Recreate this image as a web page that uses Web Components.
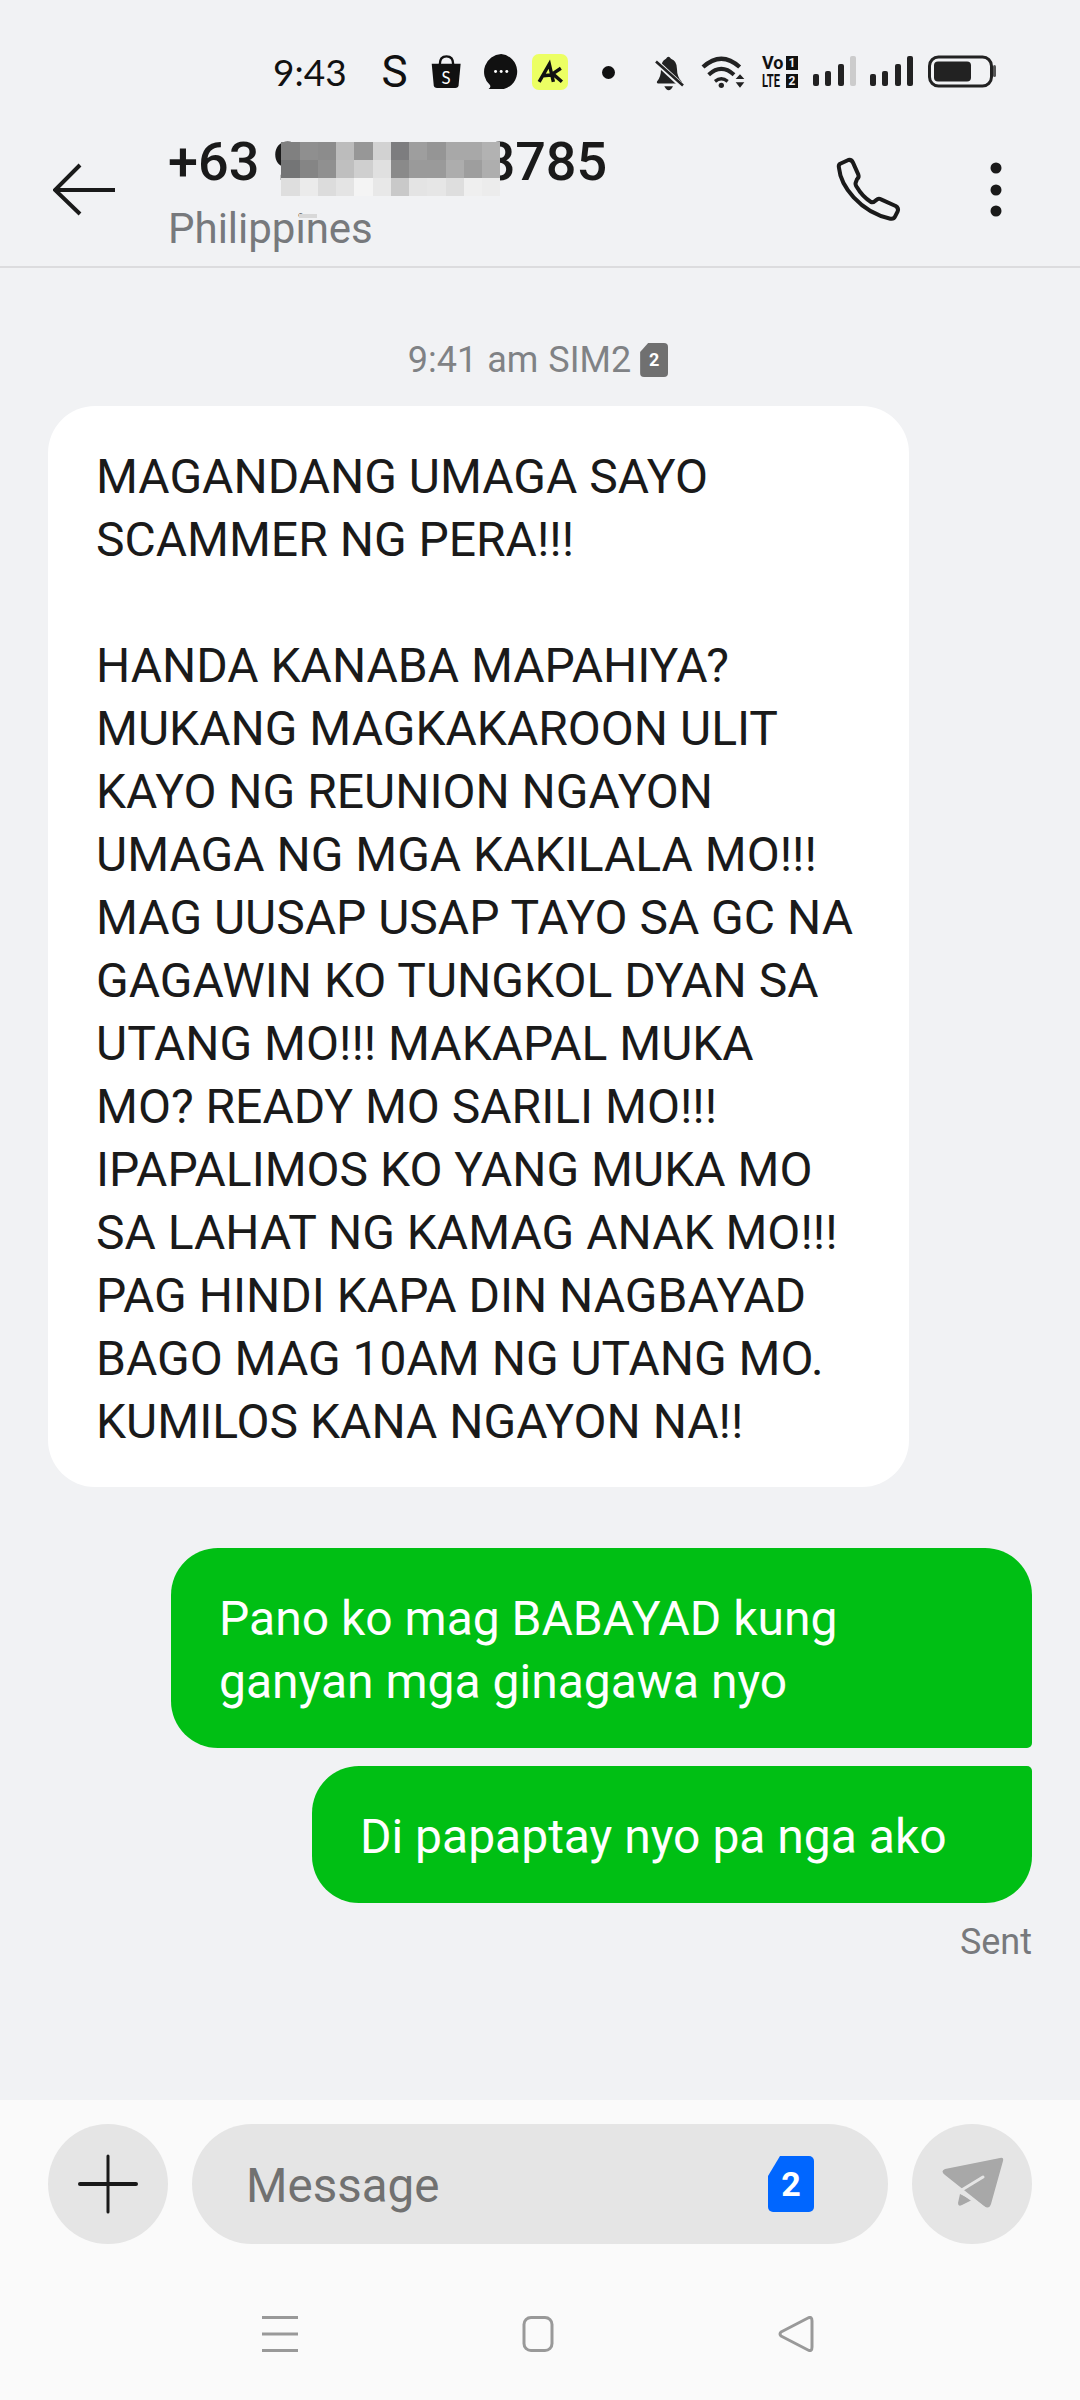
<!DOCTYPE html>
<html>
<head>
<meta charset="utf-8">
<title>Messages</title>
<style>
  html, body { margin: 0; padding: 0; }
  body {
    width: 1080px;
    height: 2400px;
    overflow: hidden;
    display: flex;
    flex-direction: column;
    background: #f1f2f4;
    font-family: Roboto, "Noto Sans", sans-serif;
    color: #1a1a1a;
  }
  sms-thread { flex: 1; }
</style>
</head>
<body>
  <status-bar></status-bar>
  <sms-header></sms-header>
  <sms-thread>
    <sms-stamp>9:41 am SIM2</sms-stamp>
    <sms-bubble>MAGANDANG UMAGA SAYO<br>SCAMMER NG PERA!!!<br><br>HANDA KANABA MAPAHIYA?<br>MUKANG MAGKAKAROON ULIT<br>KAYO NG REUNION NGAYON<br>UMAGA NG MGA KAKILALA MO!!!<br>MAG UUSAP USAP TAYO SA GC NA<br>GAGAWIN KO TUNGKOL DYAN SA<br>UTANG MO!!! MAKAPAL MUKA<br>MO? READY MO SARILI MO!!!<br>IPAPALIMOS KO YANG MUKA MO<br>SA LAHAT NG KAMAG ANAK MO!!!<br>PAG HINDI KAPA DIN NAGBAYAD<br>BAGO MAG 10AM NG UTANG MO.<br>KUMILOS KANA NGAYON NA!!</sms-bubble>
    <sms-bubble kind="first" style="margin-top:61px">Pano ko mag BABAYAD kung<br>ganyan mga ginagawa nyo</sms-bubble>
    <sms-bubble kind="last" style="margin-top:18px">Di papaptay nyo pa nga ako</sms-bubble>
    <sms-sent>Sent</sms-sent>
  </sms-thread>
  <sms-composer></sms-composer>
  <nav-bar></nav-bar>

<script>
class StatusBar extends HTMLElement {
  constructor() {
    super();
    this.shadowDOM = this.attachShadow({mode: "open"});
    const bars = (grey) => `
      <svg width="43" height="34" viewBox="0 0 43 34">
        <rect x="0" y="19" width="6" height="12" rx="2" fill="#222"/>
        <rect x="12" y="16" width="6" height="15" rx="2" fill="#222"/>
        <rect x="25" y="9" width="6" height="22" rx="2" fill="#222"/>
        <rect x="37" y="1" width="6" height="30" rx="2" fill="${grey}"/>
      </svg>`;
    this.shadowDOM.innerHTML = `
      <style>
        :host {
          display: flex;
          align-items: center;
          box-sizing: border-box;
          height: 110px;
          padding: 54px 0 20px 273px;
          color: #111;
        }
        svg { display: block; flex: none; }
        .time { width: 73px; font: 400 37px/36px Lato, sans-serif; white-space: nowrap; }
        .s { width: 27px; margin-left: 35px; font: 400 44px/36px Roboto, sans-serif; text-align: center; }
        .volte { width: 36px; display: grid; grid-template-columns: 24px 12px; row-gap: 4px; font: 700 18px/14px Roboto, sans-serif; }
        .volte span { display: block; height: 14px; white-space: nowrap; }
        .narrow { transform: scaleX(.62); transform-origin: left center; }
        .box { background: #111; color: #f1f2f4; font-size: 12px; text-align: center; width: 12px; }
      </style>
      <div class="time">9:43</div>
      <div class="s">S</div>
      <svg style="margin-left:20px" width="37" height="37" viewBox="505 45 110 110">
        <path d="M540 76 Q540 52 560 52 Q580 52 580 76" fill="none" stroke="#111" stroke-width="7"/>
        <path d="M516 74 H602 L596 138 Q595 146 586 146 H532 Q523 146 522 138 Z" fill="#111"/>
        <text x="559" y="133" text-anchor="middle" font-family="Lato, sans-serif" font-size="50" fill="#fff">S</text>
      </svg>
      <svg style="margin-left:15px" width="43" height="43" viewBox="650 35 130 130">
        <path d="M714 44 A54 54 0 0 1 722 150 L676 150 Q684 144 680 138 A54 54 0 0 1 714 44 Z" fill="#111"/>
        <circle cx="697" cy="97" r="4.5" fill="#fff"/><circle cx="714" cy="97" r="4.5" fill="#fff"/><circle cx="731" cy="97" r="4.5" fill="#fff"/>
      </svg>
      <svg style="margin-left:9px" width="36" height="36" viewBox="817 42 106 106">
        <rect x="817" y="42" width="106" height="106" rx="20" fill="#ecff63"/>
        <path d="M838 124 L868 72 L880 124 M850 106 L872 104 L902 84 M880 102 L905 124" fill="none" stroke="#111" stroke-width="10"/>
      </svg>
      <svg style="margin-left:33px" width="15" height="15" viewBox="0 0 15 15"><circle cx="7.5" cy="7.5" r="6.5" fill="#111"/></svg>
      <svg style="margin-left:35px" width="35" height="37" viewBox="40 40 105 110">
        <path d="M58 122 Q70 108 70 85 Q70 60 85 54 Q92 42 100 54 Q118 60 118 85 Q118 108 132 122 Q134 128 126 128 H64 Q56 128 58 122 Z" fill="#222"/>
        <path d="M80 136 H106 Q100 148 93 148 Q86 148 80 136 Z" fill="#222"/>
        <path d="M50 58 L132 134" stroke="#f1f2f4" stroke-width="16"/>
        <path d="M55 62 L136 134" stroke="#222" stroke-width="8"/>
      </svg>
      <svg style="margin-left:12px" width="50" height="42" viewBox="180 30 150 126">
        <path d="M195 78 Q250 28 305 78" fill="none" stroke="#222" stroke-width="13"/>
        <path d="M212 101 Q250 66 288 101" fill="none" stroke="#222" stroke-width="12"/>
        <path d="M231 121 Q250 106 269 121" fill="none" stroke="#222" stroke-width="10"/>
        <circle cx="250" cy="133" r="8" fill="#222"/>
        <path d="M306 100 L319 114 H293 Z M293 124 H319 L306 140 Z" fill="#222"/>
      </svg>
      <div class="volte" style="margin-left:14px">
        <span>Vo</span><span class="box">1</span>
        <span class="narrow">LTE</span><span class="box">2</span>
      </div>
      <div style="margin-left:15px">${bars("#cccccc")}</div>
      <div style="margin-left:14px">${bars("#222")}</div>
      <svg style="margin-left:15px" width="70" height="34" viewBox="0 0 70 34">
        <rect x="1.5" y="2" width="62" height="29" rx="9" fill="none" stroke="#222" stroke-width="3"/>
        <rect x="6" y="6.5" width="37" height="20" rx="4" fill="#222"/>
        <rect x="65" y="10" width="3" height="12" rx="1.5" fill="#555"/>
      </svg>
    `;
  }
}

class PixelMask extends HTMLElement {
  constructor() {
    super();
    this.shadowDOM = this.attachShadow({mode: "open"});
    const cells = [
      "#808080","#8f8f8f","#8c8c8c","#bcbcbc","#979797","#d2d2d2","#7d7d7f","#9e9e9e","#959595","#a8a8a8","#a8a8a8","#b2b2b2",
      "#747576","#858585","#909090","#bfbfbf","#cfcfcf","#e0e0e0","#8a8a8a","#9a9a9a","#9a9a9a","#adadad","#9e9e9e","#aeaeae",
      "#dedede","#ebebeb","#dcdcdc","#e4e4e4","#f4f4f4","#e8e8e8","#c9c9c9","#e4e4e4","#e6e6e6","#dedede","#efefef","#ececec"
    ];
    this.shadowDOM.innerHTML = `
      <style>
        :host {
          display: grid;
          grid-template-columns: repeat(12, 18.25px);
          grid-auto-rows: 18px;
          position: relative;
          z-index: 1;
        }
        .stray { position: absolute; left: 18px; top: 72px; width: 18px; height: 4px; background: #d8d8d8; }
      </style>
      ${cells.map(c => `<i style="background:${c}"></i>`).join("")}
      <div class="stray"></div>
    `;
  }
}

class SmsHeader extends HTMLElement {
  constructor() {
    super();
    this.shadowDOM = this.attachShadow({mode: "open"});
    this.shadowDOM.innerHTML = `
      <style>
        :host {
          display: flex;
          align-items: center;
          box-sizing: border-box;
          height: 158px;
          padding: 3px 0 0 53px;
          border-bottom: 2px solid #dcdcde;
        }
        svg { display: block; flex: none; }
        .info { width: 666px; margin-left: 49px; align-self: flex-start; padding-top: 18px; }
        .title { display: flex; align-items: flex-start; font: 500 54px/62px Roboto, sans-serif; color: #1a1a1a; white-space: nowrap; }
        pixel-mask { margin: 11px -16px 0 -22px; }
        .sub { margin-top: 8px; font: 400 42px/50px Roboto, sans-serif; color: #77797c; }
      </style>
      <svg width="66" height="54" viewBox="0 0 66 54">
        <path d="M2 27 H62 M27 2 L2 27 L27 51" fill="none" stroke="#1a1a1a" stroke-width="4" stroke-linejoin="miter"/>
      </svg>
      <div class="info">
        <div class="title"><span>+63 9</span><pixel-mask></pixel-mask><span>8785</span></div>
        <div class="sub">Philippines</div>
      </div>
      <svg width="70" height="70" viewBox="45 45 210 210">
        <path d="M62 72 L88 60 Q98 58 102 68 L118 104 Q121 112 114 118 L110 128 Q108 134 114 142 Q130 170 156 186 Q164 188 172 180 Q178 174 186 178 L230 198 Q240 204 236 214 L228 230 Q224 238 214 236 Q150 222 104 172 Q64 128 60 84 Q58 76 62 72 Z" fill="none" stroke="#1a1a1a" stroke-width="12" stroke-linejoin="round"/>
      </svg>
      <svg style="margin-left:86px" width="12" height="56" viewBox="0 0 12 56">
        <circle cx="6" cy="6" r="5.5" fill="#1a1a1a"/><circle cx="6" cy="28" r="5.5" fill="#1a1a1a"/><circle cx="6" cy="49" r="5.5" fill="#1a1a1a"/>
      </svg>
    `;
  }
}

class SmsThread extends HTMLElement {
  constructor() {
    super();
    this.shadowDOM = this.attachShadow({mode: "open"});
    this.shadowDOM.innerHTML = `
      <style>
        :host {
          display: flex;
          flex-direction: column;
          box-sizing: border-box;
          padding: 69px 48px 0;
        }
      </style>
      <slot></slot>
    `;
  }
}

class SmsStamp extends HTMLElement {
  constructor() {
    super();
    this.shadowDOM = this.attachShadow({mode: "open"});
    this.shadowDOM.innerHTML = `
      <style>
        :host {
          display: flex;
          align-items: center;
          justify-content: center;
          gap: 9px;
          height: 46px;
          margin-bottom: 23px;
          padding-right: 4px;
          font: 400 36px/46px Roboto, sans-serif;
          word-spacing: 1px;
          color: #808285;
        }
        .sim {
          width: 28px; height: 34px;
          background: #707070;
          border-radius: 4px;
          clip-path: polygon(8px 0, 100% 0, 100% 100%, 0 100%, 0 9px);
          color: #fff;
          font: 700 18px/34px Roboto, sans-serif;
          text-align: center;
        }
      </style>
      <span><slot></slot></span><span class="sim">2</span>
    `;
  }
}

class SmsBubble extends HTMLElement {
  constructor() {
    super();
    this.shadowDOM = this.attachShadow({mode: "open"});
    this.shadowDOM.innerHTML = `
      <style>
        :host {
          display: block;
          box-sizing: border-box;
          width: 861px;
          padding: 39px 20px 34px 48px;
          border-radius: 47px;
          background: #fff;
          color: #1a1a1a;
          font: 400 48px/63px Roboto, sans-serif;
          white-space: nowrap;
        }
        :host([kind]) { background: #00bf14; color: #fff; align-self: flex-end; padding-top: 39px; padding-bottom: 35px; }
        :host([kind="first"]) { border-bottom-right-radius: 5px; }
        :host([kind="last"]) { width: 720px; border-top-right-radius: 5px; }
      </style>
      <slot></slot>
    `;
  }
}

class SmsSent extends HTMLElement {
  constructor() {
    super();
    this.shadowDOM = this.attachShadow({mode: "open"});
    this.shadowDOM.innerHTML = `
      <style>
        :host {
          display: block;
          margin-top: 16px;
          text-align: right;
          font: 400 36px/46px Roboto, sans-serif;
          color: #77797c;
        }
      </style>
      <slot></slot>
    `;
  }
}

class SmsComposer extends HTMLElement {
  constructor() {
    super();
    this.shadowDOM = this.attachShadow({mode: "open"});
    this.shadowDOM.innerHTML = `
      <style>
        :host {
          display: flex;
          gap: 24px;
          box-sizing: border-box;
          height: 144px;
          padding: 24px 48px 0;
          background: #fafafa;
        }
        .round { flex: none; width: 120px; height: 120px; border-radius: 50%; background: #e5e5e5; display: block; }
        .input {
          flex: 1;
          display: flex;
          align-items: center;
          justify-content: space-between;
          height: 120px;
          padding: 0 74px 0 54px;
          border-radius: 60px;
          background: #e5e5e5;
          font: 400 47.5px/120px Roboto, sans-serif;
          color: #717171;
        }
        .msg { padding-top: 4px; line-height: 116px; }
        .sim {
          width: 46px; height: 56px;
          background: #0066ff;
          border-radius: 5px;
          clip-path: polygon(12px 0, 100% 0, 100% 100%, 0 100%, 0 20px);
          color: #fff;
          font: 700 34px/56px Roboto, sans-serif;
          text-align: center;
        }
      </style>
      <svg class="round" viewBox="0 0 120 120">
        <path d="M32 60 H88" stroke="#1a1a1a" stroke-width="4" stroke-linecap="round"/>
        <path d="M60 32 V88" stroke="#1a1a1a" stroke-width="3" stroke-linecap="round"/>
      </svg>
      <div class="input"><span class="msg">Message</span><span class="sim">2</span></div>
      <svg class="round" viewBox="0 0 120 120">
        <path d="M33 45 L88 34 Q92 33 91 37 L79 80 Q77 86 72 82 L33 51 Q28 47 33 45 Z" fill="#a8a8a8"/>
        <path d="M48 70 L46 79 Q46 83 50 81 L60 76 Z" fill="#a8a8a8"/>
        <path d="M71 53 L48 67 L76 87" fill="none" stroke="#e5e5e5" stroke-width="3" stroke-linecap="round"/>
      </svg>
    `;
  }
}

class NavBar extends HTMLElement {
  constructor() {
    super();
    this.shadowDOM = this.attachShadow({mode: "open"});
    this.shadowDOM.innerHTML = `
      <style>
        :host {
          display: flex;
          box-sizing: border-box;
          height: 156px;
          padding: 72px 0 0 262px;
          background: #fafafa;
        }
        svg { display: block; flex: none; }
      </style>
      <svg width="36" height="36" viewBox="0 0 36 36">
        <path d="M0 1.5 H36 M0 18 H36 M0 34.5 H36" stroke="#999" stroke-width="3"/>
      </svg>
      <svg style="margin-left:222px" width="36" height="36" viewBox="0 0 36 36">
        <rect x="4" y="1.5" width="28" height="33" rx="7" fill="none" stroke="#999" stroke-width="3"/>
      </svg>
      <svg style="margin-left:222px" width="36" height="36" viewBox="0 0 36 36">
        <path d="M30 2 Q34 0 34 5 V31 Q34 36 30 34 L3 20 Q1 18 3 16 Z" fill="none" stroke="#999" stroke-width="3" stroke-linejoin="round"/>
      </svg>
    `;
  }
}

customElements.define("status-bar", StatusBar);
customElements.define("pixel-mask", PixelMask);
customElements.define("sms-header", SmsHeader);
customElements.define("sms-thread", SmsThread);
customElements.define("sms-stamp", SmsStamp);
customElements.define("sms-bubble", SmsBubble);
customElements.define("sms-sent", SmsSent);
customElements.define("sms-composer", SmsComposer);
customElements.define("nav-bar", NavBar);
</script>
</body>
</html>
